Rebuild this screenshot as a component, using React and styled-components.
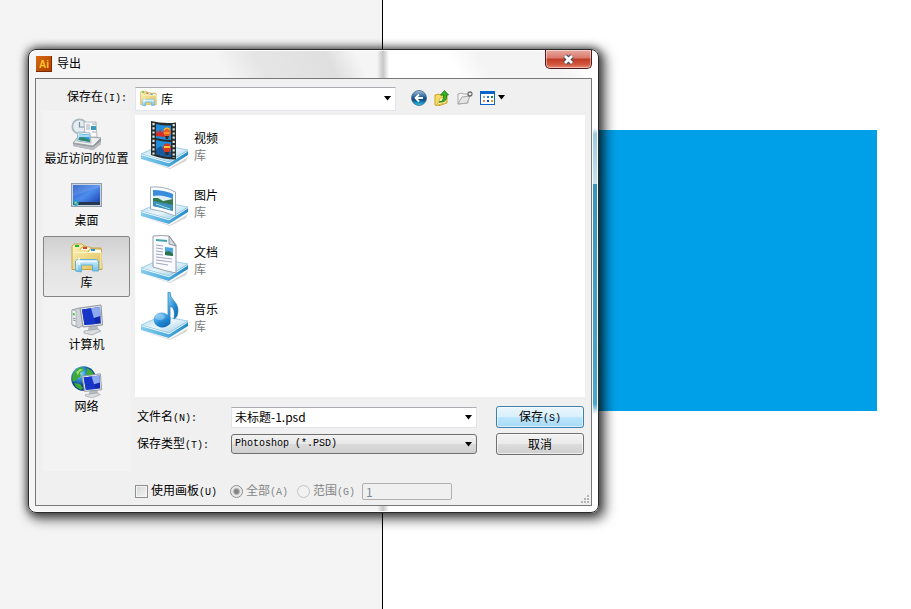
import React, { useState } from "react";
import styled, { createGlobalStyle, css } from "styled-components";

const ui = '"Noto Sans CJK SC", "Noto Sans", sans-serif';
const mono = '"Liberation Mono", "Noto Sans CJK SC", monospace';

const GlobalStyle = createGlobalStyle`
  *, *::before, *::after { box-sizing: border-box; }
  body { margin: 0; background: #fff; font: 12px/16px ${ui}; color: #000; }
  button, input, select { font: inherit; color: inherit; margin: 0; }
`;

/* Canvas behind the dialog */
const Desktop = styled.main`
  position: relative;
  display: flex;
  min-height: 100vh;
  overflow: hidden;
`;
const Pasteboard = styled.div`
  flex: 0 0 42%;
  background: #f4f4f4;
  border-right: 1px solid #000;
`;
const Artboard = styled.div`
  flex: 1;
  background: #fff;
`;
const Shape = styled.div`
  position: absolute;
  left: 420px;
  top: 130px;
  width: 457px;
  height: 281px;
  background: #00a0e9;
`;

/* Window */
const Dialog = styled.section`
  position: absolute;
  left: 28px;
  top: 49px;
  width: 571px;
  padding: 0 6px 6px;
  border: 1px solid #2a2a2a;
  border-radius: 8px;
  background:
    linear-gradient(transparent, #9ccbe2 6px, #c9e2ee) right 1px top 78px / 4px 56px no-repeat,
    linear-gradient(#3b94bd, #4ba6cf 220px, transparent) right 1px top 134px / 4px 230px no-repeat,
    linear-gradient(90deg, transparent, #c6c6c6, transparent) 348px 0 / 12px 100% no-repeat,
    linear-gradient(62deg, transparent 22%, #e6e6e6 40%, #dfdfdf 74%, transparent 88%) 150px 0 / 200px 28px no-repeat,
    linear-gradient(62deg, transparent 20%, #f4f4f4 38%, #f4f4f4 80%, transparent) 395px 0 / 160px 28px no-repeat,
    linear-gradient(90deg, #f5f5f5 0 352px, #fff 356px);
  box-shadow: inset 0 0 0 1px #fff, 0 0 9px 1px rgba(0, 0, 0, 0.6), 4px 4px 12px 3px rgba(0, 0, 0, 0.55);
`;
const TitleBar = styled.header`
  display: flex;
  align-items: center;
  gap: 5px;
  height: 28px;
  padding: 0 0 1px 1px;
`;
const Title = styled.h1`
  flex: 1;
  margin: 0;
  padding-bottom: 1px;
  font-size: 12px;
  font-weight: 400;
`;
const CloseButton = styled.button`
  align-self: flex-start;
  display: grid;
  place-items: center;
  width: 47px;
  height: 19px;
  padding: 0;
  border: 1px solid #4b1a1a;
  border-top: 0;
  border-radius: 0 0 5px 5px;
  background: linear-gradient(#e9aaa0, #d9786c 45%, #c03a24 50%, #d2583f 80%, #e48a70);
  box-shadow: inset 0 0 0 1px rgba(255, 255, 255, 0.45);
`;
const Client = styled.form`
  border: 1px solid #777;
  background: #f0f0f0;
  padding: 7px 6px 0 7px;
`;

/* Top row */
const LookRow = styled.div`
  display: flex;
  align-items: center;
  height: 25px;
`;
const LookLabel = styled.label`
  flex: 0 0 92px;
  padding: 0 8px 3px 0;
  text-align: right;
  white-space: nowrap;
`;
const Keys = styled.span`
  font: 10px/16px ${mono};
`;
const Combo = styled.span`
  display: grid;
  align-items: center;
  flex: ${(p) => p.$width ? `0 0 ${p.$width}` : "1"};
  > * { grid-area: 1 / 1; }
  > svg { pointer-events: none; }
  > svg:last-child { justify-self: end; margin-right: 4px; }
`;
const fieldSkin = css`
  width: 100%;
  appearance: none;
  outline: 0;
  border-radius: 0;
`;
const LookSelect = styled.select`
  ${fieldSkin}
  height: 24px;
  padding: 0 20px 0 25px;
  border: 1px solid #e3e3ea;
  border-top-color: #abadb3;
  background: #fff;
`;
const FolderMark = styled.span`
  display: flex;
  padding-left: 5px;
  pointer-events: none;
`;
const Tools = styled.nav`
  display: flex;
  align-items: center;
  gap: 7px;
  padding: 0 0 2px 15px;
`;
const ToolButton = styled.button`
  display: flex;
  align-items: center;
  gap: 2px;
  padding: 0;
  border: 0;
  background: none;
`;

/* Middle */
const Body = styled.div`
  display: grid;
  grid-template-columns: 88px 1fr;
  column-gap: 4px;
`;
const Places = styled.nav`
  height: 360px;
  background: #f3f3f3;
  padding-top: 1px;
`;
const Place = styled.button`
  display: flex;
  flex-direction: column;
  align-items: center;
  width: 87px;
  height: 61px;
  margin-bottom: 1px;
  padding: 5px 0 0;
  border: 1px solid transparent;
  border-radius: 2px;
  background: none;
  line-height: 16px;
  white-space: nowrap;
  ${(p) => p.$active && css`
    border-color: #858585;
    background: linear-gradient(#d0d0d0, #e2e2e2 45%, #ebebeb);
  `}
`;
const Main = styled.div`
  padding-top: 4px;
`;
const FileList = styled.ul`
  height: 282px;
  margin: 0;
  padding: 2px 0 0 5px;
  list-style: none;
  background: #fff;
`;
const FileItem = styled.li`
  display: flex;
  align-items: center;
  gap: 4px;
  height: 57px;
  line-height: 17px;
`;
const Kind = styled.div`
  color: #7b7b7b;
`;
const FieldRow = styled.div`
  display: flex;
  align-items: center;
  height: 22px;
  margin-top: ${(p) => p.$gap};
  padding: 0 1px 0 2px;
`;
const FieldLabel = styled.label`
  flex: 0 0 94px;
  white-space: nowrap;
`;
const NameInput = styled.input`
  ${fieldSkin}
  height: 21px;
  padding: 0 18px 2px 3px;
  border: 1px solid #e3e3ea;
  border-top-color: #abadb3;
  background: #fff;
`;
const TypeSelect = styled.select`
  ${fieldSkin}
  height: 20px;
  padding: 0 18px 0 3px;
  border: 1px solid #707070;
  border-radius: 3px;
  background: linear-gradient(#f2f2f2, #e8e8e8 48%, #dadada 52%, #cfcfcf);
  && { font: 10px/16px ${mono}; }
`;
const PushButton = styled.button`
  width: 88px;
  height: 22px;
  margin-left: 19px;
  padding: 0;
  border: 1px solid ${(p) => (p.$primary ? "#3c7fb1" : "#707070")};
  border-radius: 3px;
  background: ${(p) => p.$primary
    ? "linear-gradient(#eaf6fd, #d9f0fc 48%, #bee6fd 52%, #a7d9f5)"
    : "linear-gradient(#f2f2f2, #ebebeb 48%, #dddddd 52%, #cfcfcf)"};
  box-shadow: inset 0 0 0 1px rgba(255, 255, 255, 0.6);
  line-height: 18px;
`;

/* Bottom */
const Options = styled.div`
  display: grid;
  grid-template-columns: 95px 67px 65px 90px 1fr;
  align-items: center;
  height: 34px;
  padding: 6px 0 0 92px;
`;
const Option = styled.label`
  display: flex;
  align-items: center;
  gap: 3px;
  color: ${(p) => (p.$off ? "#858585" : "#000")};
  white-space: nowrap;
`;
const Tick = styled.input`
  appearance: none;
  width: 13px;
  height: 13px;
  border: 1px solid #8e8f8f;
  border-radius: ${(p) => (p.type === "radio" ? "50%" : "0")};
  background: ${(p) => p.type === "radio"
    ? p.$on
      ? "radial-gradient(circle, #858585 0 2px, #e9e9e9 4px)"
      : "#f1f1f1"
    : "linear-gradient(135deg, #d3d5d8, #f6f6f6)"};
  ${(p) => p.type === "radio" ? !p.$on && "border-color: #c4c4c4;" : "box-shadow: inset 0 0 0 1px #f4f4f4;"}
`;
const RangeInput = styled.input`
  ${fieldSkin}
  height: 17px;
  padding: 0 3px;
  border: 1px solid #afafaf;
  border-radius: 2px;
  background: #f0f0f0;
  color: #7d8a99;
`;
const Grip = styled.div`
  display: flex;
  justify-content: flex-end;
  align-self: end;
  margin-right: -5px;
`;

/* Drawings */
const Arrow = () => (
  <svg width="9" height="5" viewBox="0 0 9 5"><path d="M1 0h7L4.500 4.500z" fill="#000" /></svg>
);

const AiIcon = () => (
  <svg width="16" height="16" viewBox="0 0 16 16">
    <defs><linearGradient id="ai" x2="1" y2="1"><stop stopColor="#d96a10" /><stop offset="1" stopColor="#a83c00" /></linearGradient></defs>
    <rect width="16" height="16" fill="url(#ai)" />
    <path d="M0 15.500h15.500V0" stroke="#7c2c00" fill="none" />
    <text x="3" y="12" fontFamily="Liberation Sans, sans-serif" fontSize="10" fontWeight="700" fill="#ffc42e">Ai</text>
  </svg>
);

const CloseIcon = () => (
  <svg width="13" height="11" viewBox="0 0 13 11">
    <path d="M3 2l7 7M10 2L3 9" stroke="#4b4e60" strokeWidth="5" />
    <path d="M3 2l7 7M10 2L3 9" stroke="#fff" strokeWidth="2.800" />
  </svg>
);

const LibraryIcon = ({ size }) => (
  <svg width={size} height={size} viewBox="0 0 32 32">
    <defs>
      <linearGradient id="fold" x2="1" y2="1"><stop stopColor="#fdf3b8" /><stop offset="1" stopColor="#e0bd55" /></linearGradient>
      <linearGradient id="stand" y2="1" x2="0"><stop stopColor="#d5f1fc" /><stop offset="1" stopColor="#6bbbe2" /></linearGradient>
    </defs>
    <path d="M1 4l2-2h8l2 2h2l1 2h14l1 21.500H1z" fill="url(#fold)" stroke="#c9a545" />
    <path d="M9 8l2-3h8l2 3M17 10l2-3h11l1 3" fill="#fffbe8" stroke="#c9a545" />
    <path d="M4 3h4v2H4z" fill="#19b53a" /><path d="M12 5h4v2h-4z" fill="#cf4630" /><path d="M20 7h4v2h-4z" fill="#2696dc" />
    <path d="M2 10.500h28v16" stroke="#fff7ce" fill="none" />
    <path d="M4.500 19l2-1.500h19l2 1.500v10h-6v-6h-11v7l-6-1z" fill="url(#stand)" stroke="#58acd6" strokeWidth=".9" />
    <path d="M6 28v-8.500h20" stroke="#fff" fill="none" opacity=".8" />
    <path d="M8 16v7M5 19.500h7" stroke="#fff" strokeWidth="1.300" />
  </svg>
);

const RecentIcon = () => (
  <svg width="32" height="32" viewBox="0 0 32 32">
    <path d="M2 25l6-7 22 2v6l-8 6L2 28z" fill="#8f9499" />
    <path d="M2 25l6-7 22 2-8 8z" fill="#eceef0" stroke="#9ba0a5" />
    <path d="M2 26l20 3 8-6v3l-8 6-20-4z" fill="#b9bdc1" />
    <circle cx="8.500" cy="8.500" r="7.200" fill="#e3edf2" stroke="#a9b8c0" strokeWidth="1.800" />
    <path d="M8.500 4v5h5" fill="none" stroke="#7890a0" strokeWidth="1.200" />
    <path d="M13 4h12l1 15H14z" fill="#fafafa" stroke="#b6babe" />
    <path d="M15 7h4M15 9h4M15 11h4M21 6h4M21 14h4" stroke="#a4aeb8" />
    <path d="M20 8h5v4h-5z" fill="#3c9bbd" />
    <path d="M7 14l12 1 1 10-14-2z" fill="#f7fbfd" stroke="#a3b5ba" />
    <path d="M8 15.500l10.500 1 .5 7.500L7.500 22z" fill="#2e9bdd" />
    <path d="M7.700 20.500l4-1.500 7 3 .3 2L7.500 22z" fill="#31866c" />
    <path d="M8 16l10.500 1v2L8 19z" fill="#a8dcf5" />
  </svg>
);

const DesktopIcon = () => (
  <svg width="32" height="32" viewBox="0 0 32 32">
    <defs><linearGradient id="desk" x2="1" y2="1"><stop stopColor="#2459c8" /><stop offset=".5" stopColor="#4d8cec" /><stop offset="1" stopColor="#153aa8" /></linearGradient></defs>
    <rect x=".5" y="3.500" width="30" height="23" fill="#cad4df" stroke="#919eac" />
    <rect x="2" y="5" width="27" height="20" fill="url(#desk)" />
    <path d="M2 16L29 7V5H2z" fill="#fff" opacity=".13" />
    <rect x="2" y="22" width="27" height="3" fill="#26364d" />
    <circle cx="5" cy="23" r="2.800" fill="#159ac4" /><path d="M3.500 23H5v-1.500" stroke="#ffe15a" fill="none" /><path d="M5.500 24H7" stroke="#8bef65" />
  </svg>
);

const Monitor = () => (
  <g>
    <path d="M18 22l8-1 2 5-12 3z" fill="#b4bac1" />
    <path d="M13 27l13-2 4 2-9 4-8-2z" fill="#dadde0" stroke="#999fa6" strokeWidth=".7" />
    <path d="M9 4l21-3 1.500 20L12 23z" fill="#e3e5e8" stroke="#8e949c" />
    <path d="M11 5.500L29 3l.8 16.500L13.500 21z" fill="#1029ad" />
    <path d="M11 5.500L20 4.300l5 15.700-11.500 1z" fill="#1736c8" />
    <path d="M20 4.300L29 3l.4 9-6.600 2z" fill="#8ea9f2" />
  </g>
);

const ComputerIcon = () => (
  <svg width="32" height="32" viewBox="0 0 32 32">
    <path d="M1 6l7-2 4 1v16l-4 3-7-3z" fill="#cfd3d7" stroke="#9ba1a7" />
    <path d="M1 6l4 1v15l-4-1.500z" fill="#f3f4f5" stroke="#9aa0a6" strokeWidth=".6" />
    <path d="M1.800 9l2 .5v2l-2-.5z" fill="#3fc53c" /><path d="M2 14l2.500.8M2 16l2.500.8" stroke="#8d9399" />
    <Monitor />
  </svg>
);

const NetworkIcon = () => (
  <svg width="32" height="32" viewBox="0 0 32 32">
    <defs><radialGradient id="globe" cx=".35" cy=".3"><stop stopColor="#a6e4ff" /><stop offset=".5" stopColor="#2f8ed2" /><stop offset="1" stopColor="#0b3f8c" /></radialGradient></defs>
    <circle cx="12.500" cy="12.500" r="12.300" fill="url(#globe)" />
    <path d="M2 8l4-5 5-2 2 3-4 3 1 3-4 3-3 3-2-2zM16 2l5 3 3 5-6 2-3-4 1-3zM3 17l6 1 3 4-2 2-5-3z" fill="#3daa35" />
    <path d="M5 6l4-3 3 .500-4 3-1 3z" fill="#96df6b" />
    <g transform="translate(3 7) scale(.88 .8)"><Monitor /></g>
  </svg>
);

const Plinth = ({ children }) => (
  <svg width="50" height="50" viewBox="0 1 50 50">
    <defs>
      <linearGradient id="plTop" x2="1" y2="1"><stop stopColor="#b8dcee" /><stop offset=".5" stopColor="#e9f5fb" /><stop offset="1" stopColor="#8fc6e4" /></linearGradient>
      <linearGradient id="plEdge" x2="1"><stop stopColor="#86cdef" /><stop offset=".6" stopColor="#4ba9dc" /><stop offset="1" stopColor="#2389c7" /></linearGradient>
    </defs>
    <path d="M3 40l27 8 18-11-2 4-16 8z" fill="#777" opacity=".3" />
    <path d="M1 34v5l28 8 19-12v-4z" fill="url(#plEdge)" />
    <path d="M1 34l20-9 27 5-19 12z" fill="url(#plTop)" stroke="#8cc5e2" strokeWidth=".8" />
    <path d="M1.500 34.800l27.500 8 18.500-11.500" stroke="#f0fbff" fill="none" />
    {children}
  </svg>
);

const VideoIcon = () => (
  <Plinth>
    <path d="M11 1q13 3 25 1.500v37q-12 0-25-4.500z" fill="#272c2c" />
    <path d="M16 4q8 2 15 1.500V20q-8 0-15-2z" fill="#218ddb" />
    <path d="M16 20q8 2 15 2v15q-8 0-15-3z" fill="#218ddb" />
    <path d="M16 15l1-5 1.500 3 1.500-4 2 4 1-2 2 6-9-1z" fill="#d92c22" />
    <path d="M16 29l5-3 3 4 7 2v5q-8 0-15-3z" fill="#17599e" />
    <ellipse cx="27" cy="12" rx="3.800" ry="4.500" fill="#ea5a24" /><path d="M24 10q3-4 6 0M24 13h6" stroke="#f6cf2a" fill="none" strokeWidth="1.200" /><path d="M25 16h4l-1 3h-2z" fill="#3d291e" />
    <ellipse cx="27" cy="28" rx="4" ry="4.500" fill="#d8381e" /><path d="M24 27h6" stroke="#ffd33d" strokeWidth="1.800" /><path d="M25 32h4l-1 3h-2z" fill="#3d291e" />
    <path d="M13.500 3v32" stroke="#dce7e7" strokeWidth="2.200" strokeDasharray="2.200 2" />
    <path d="M33.700 4v34" stroke="#dce7e7" strokeWidth="2.200" strokeDasharray="2.200 2" />
  </Plinth>
);

const PictureIcon = () => (
  <Plinth>
    <path d="M10.500 10q14-1 25 5v24q-12-5-25-7z" fill="#fafcfd" stroke="#a1aeb7" />
    <path d="M13 13q11 0 20 4v17q-10-3-20-5z" fill="#3a8ddc" />
    <path d="M13 19q9-2 20 3v4l-20-3z" fill="#dff1f8" />
    <path d="M13 21h5l5 3 10-2v6l-20-4z" fill="#35784c" />
    <path d="M13 24l20 4v6q-10-3-20-5z" fill="#3b91b8" />
    <path d="M16 27l14 5" stroke="#a2e0eb" />
  </Plinth>
);

const DocumentIcon = () => (
  <Plinth>
    <path d="M13 2q9-1 16 0l7 9v28q-11-2-23-6z" fill="#f9fafd" stroke="#9a9fa9" />
    <path d="M29 2v8l7 2z" fill="#d5dbe3" stroke="#8e959f" />
    <path d="M16 6l11 1" stroke="#44a3a9" strokeWidth="2" />
    <path d="M16 11l7 1M16 14l7 1M16 17l7 1M16 20l7 1M16 23l16 2M16 26l16 2M16 29l12 2" stroke="#a3a5c2" />
    <path d="M25 13l8 1v8l-8-1z" fill="#4ca6da" /><path d="M25 18l4-1 4 3v2l-8-1z" fill="#2e704a" />
  </Plinth>
);

const MusicIcon = () => (
  <Plinth>
    <defs><linearGradient id="note" x2="1" y2="1"><stop stopColor="#8fd6fb" /><stop offset=".6" stopColor="#1d85cf" /><stop offset="1" stopColor="#0c5da8" /></linearGradient></defs>
    <path d="M28 1h2q0 5 4 9 6 6 3 15-2 3-3 3 2-11-4-13v18h-2z" fill="url(#note)" stroke="#2377b4" strokeWidth=".7" />
    <ellipse cx="22" cy="29" rx="8.500" ry="7.500" fill="url(#note)" transform="rotate(14 22 29)" />
    <ellipse cx="20" cy="26" rx="5" ry="3" fill="#c6ecff" opacity=".4" />
  </Plinth>
);

const BackIcon = () => (
  <svg width="16" height="16" viewBox="0 0 16 16">
    <defs><linearGradient id="back" x2="0" y2="1"><stop stopColor="#a6c2dc" /><stop offset=".45" stopColor="#225b98" /><stop offset=".6" stopColor="#11477f" /><stop offset="1" stopColor="#27cdf2" /></linearGradient></defs>
    <circle cx="8" cy="8" r="7.500" fill="url(#back)" stroke="#456a8e" strokeWidth=".8" />
    <path d="M12 8H5M8 4.500L4.500 8 8 11.500" fill="none" stroke="#fff" strokeWidth="1.800" />
  </svg>
);
const UpIcon = () => (
  <svg width="16" height="16" viewBox="0 0 16 16">
    <path d="M1 5l4-1 1 1h7v8l-9 3-3-1z" fill="#f8dc69" stroke="#cba02b" />
    <path d="M3 15l3-7 7-2-1 7z" fill="#fff1a0" stroke="#dbb746" />
    <path d="M5 12q5 0 4.500-7H6.500L10.500.500l4 4.500h-2q1 8-7.500 7z" fill="#35b526" stroke="#15770f" strokeWidth=".8" />
  </svg>
);
const NewFolderIcon = () => (
  <svg width="16" height="16" viewBox="0 0 16 16">
    <path d="M1 14V4l4-1 1 1h5v9z" fill="#f4f4f4" stroke="#aaa" />
    <path d="M1 14l4-7 8-1-3 7z" fill="#e6e6e6" stroke="#aaa" />
    <path d="M13 1v6M10 4h6M11 2l4 4M15 2l-4 4" stroke="#666" strokeWidth="1.200" /><circle cx="13" cy="4" r="1.300" fill="#eee" />
  </svg>
);
const ViewIcon = () => (
  <svg width="15" height="14" viewBox="0 0 15 14">
    <rect x=".5" y=".5" width="14" height="13" fill="#fff" stroke="#0b63cc" /><path d="M0 0h15v3H0z" fill="#0b63cc" />
    <path d="M3 5h2v2H3z" fill="#a8a0bb" /><path d="M7 5h2v2H7z" fill="#1b7de8" /><path d="M11 5h2v2h-2z" fill="#138b23" />
    <path d="M3 9h2v2H3z" fill="#f47c52" /><path d="M7 9h2v2H7z" fill="#153aa5" /><path d="M11 9h2v2h-2z" fill="#c9a415" />
  </svg>
);
const GripIcon = () => (
  <svg width="10" height="10" viewBox="0 0 10 10" fill="#b5b5b5">
    <path d="M7 0h2v2H7zM4 3h2v2H4zM7 3h2v2H7zM1 6h2v2H1zM4 6h2v2H4zM7 6h2v2H7z" />
  </svg>
);

const places = [
  ["最近访问的位置", RecentIcon],
  ["桌面", DesktopIcon],
  ["库", LibraryIcon],
  ["计算机", ComputerIcon],
  ["网络", NetworkIcon],
];
const libraries = [
  ["视频", VideoIcon],
  ["图片", PictureIcon],
  ["文档", DocumentIcon],
  ["音乐", MusicIcon],
];

export default function App() {
  const [place, setPlace] = useState("库");
  return (
    <>
      <GlobalStyle />
      <Desktop>
        <Pasteboard />
        <Artboard />
        <Shape />
        <Dialog role="dialog" aria-labelledby="title">
          <TitleBar>
            <AiIcon />
            <Title id="title">导出</Title>
            <CloseButton type="button" aria-label="关闭"><CloseIcon /></CloseButton>
          </TitleBar>
          <Client onSubmit={(e) => e.preventDefault()}>
            <LookRow>
              <LookLabel htmlFor="look">保存在<Keys>(I):</Keys></LookLabel>
              <Combo $width="261px">
                <LookSelect id="look"><option>库</option></LookSelect>
                <FolderMark><LibraryIcon size={17} /></FolderMark>
                <Arrow />
              </Combo>
              <Tools>
                <ToolButton type="button" aria-label="后退"><BackIcon /></ToolButton>
                <ToolButton type="button" aria-label="向上"><UpIcon /></ToolButton>
                <ToolButton type="button" aria-label="新建文件夹"><NewFolderIcon /></ToolButton>
                <ToolButton type="button" aria-label="查看"><ViewIcon /><Arrow /></ToolButton>
              </Tools>
            </LookRow>
            <Body>
              <Places>
                {places.map(([name, Icon]) => (
                  <Place key={name} type="button" $active={name === place} onClick={() => setPlace(name)}>
                    <Icon size={32} />
                    {name}
                  </Place>
                ))}
              </Places>
              <Main>
                <FileList>
                  {libraries.map(([name, Icon]) => (
                    <FileItem key={name}>
                      <Icon />
                      <div>{name}<Kind>库</Kind></div>
                    </FileItem>
                  ))}
                </FileList>
                <FieldRow $gap="9px">
                  <FieldLabel htmlFor="name">文件名<Keys>(N):</Keys></FieldLabel>
                  <Combo>
                    <NameInput id="name" defaultValue="未标题-1.psd" />
                    <Arrow />
                  </Combo>
                  <PushButton type="submit" $primary>保存<Keys>(S)</Keys></PushButton>
                </FieldRow>
                <FieldRow $gap="5px">
                  <FieldLabel htmlFor="type">保存类型<Keys>(T):</Keys></FieldLabel>
                  <Combo>
                    <TypeSelect id="type"><option>Photoshop (*.PSD)</option></TypeSelect>
                    <Arrow />
                  </Combo>
                  <PushButton type="button">取消</PushButton>
                </FieldRow>
              </Main>
            </Body>
            <Options>
              <Option><Tick type="checkbox" /><span>使用画板<Keys>(U)</Keys></span></Option>
              <Option $off><Tick type="radio" name="range" $on defaultChecked disabled /><span>全部<Keys>(A)</Keys></span></Option>
              <Option $off><Tick type="radio" name="range" disabled /><span>范围<Keys>(G)</Keys></span></Option>
              <RangeInput aria-label="范围" defaultValue="1" disabled />
              <Grip><GripIcon /></Grip>
            </Options>
          </Client>
        </Dialog>
      </Desktop>
    </>
  );
}
